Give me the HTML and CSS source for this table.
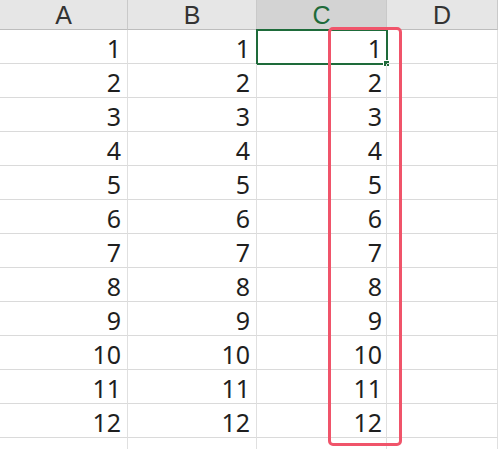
FILE: index.html
```html
<!DOCTYPE html>
<html>
<head>
<meta charset="utf-8">
<link rel="stylesheet" href="styles.css">
</head>
<body>
<div class="sheet">
  <div class="grid">
    <div class="hd">A</div>
    <div class="hd">B</div>
    <div class="hd sel">C</div>
    <div class="hd">D</div>

    <div class="c">1</div><div class="c">1</div><div class="c cc active">1<span class="handle"></span></div><div class="c"></div>
    <div class="c">2</div><div class="c">2</div><div class="c cc">2</div><div class="c"></div>
    <div class="c">3</div><div class="c">3</div><div class="c cc">3</div><div class="c"></div>
    <div class="c">4</div><div class="c">4</div><div class="c cc">4</div><div class="c"></div>
    <div class="c">5</div><div class="c">5</div><div class="c cc">5</div><div class="c"></div>
    <div class="c">6</div><div class="c">6</div><div class="c cc">6</div><div class="c"></div>
    <div class="c">7</div><div class="c">7</div><div class="c cc">7</div><div class="c"></div>
    <div class="c">8</div><div class="c">8</div><div class="c cc">8</div><div class="c"></div>
    <div class="c">9</div><div class="c">9</div><div class="c cc">9</div><div class="c"></div>
    <div class="c">10</div><div class="c">10</div><div class="c cc">10</div><div class="c"></div>
    <div class="c">11</div><div class="c">11</div><div class="c cc">11</div><div class="c"></div>
    <div class="c">12</div><div class="c">12</div><div class="c cc">12</div><div class="c"></div>
    <div class="c"></div><div class="c"></div><div class="c cc"></div><div class="c"></div>
  </div>
  <div class="highlight"></div>
</div>
</body>
</html>
```

FILE: styles.css
```css
html, body {
  margin: 0;
  padding: 0;
  background: #ffffff;
}
.sheet {
  position: relative;
  width: 498px;
  height: 449px;
  overflow: hidden;
  font-family: "Noto Sans", "Noto Sans CJK SC", sans-serif;
  color: #1f1f1f;
}
.grid {
  display: grid;
  grid-template-columns: 128px 129px 130px 1fr;
  grid-template-rows: 30px repeat(13, 34px);
}
.hd {
  background: #e6e6e6;
  border-right: 1px solid #c9c9c9;
  border-bottom: 1px solid #bdbdbd;
  display: flex;
  align-items: center;
  justify-content: center;
  font-family: "Liberation Sans", Arial, sans-serif;
  font-size: 25px;
  color: #333333;
  line-height: 28px;
  padding-top: 1px;
}
.hd.sel {
  background: #d3d3d3;
  color: #1e6b3a;
}
.c {
  border-right: 1px solid #e0e0e0;
  border-bottom: 1px solid #dadada;
  display: flex;
  align-items: center;
  justify-content: flex-end;
  padding-right: 6px;
  padding-top: 2px;
  font-size: 25px;
  line-height: 30px;
  position: relative;
}
.cc {
  padding-right: 4px;
}
.active {
  outline: 2px solid #1e6b3a;
  outline-offset: -1px;
}
.handle {
  position: absolute;
  right: -4px;
  bottom: -4px;
  width: 5px;
  height: 5px;
  background: #1e6b3a;
  border: 1px solid #ffffff;
}
.highlight {
  position: absolute;
  left: 328px;
  top: 27px;
  width: 68px;
  height: 413px;
  border: 3px solid #f0546a;
  border-radius: 5px;
}
```
